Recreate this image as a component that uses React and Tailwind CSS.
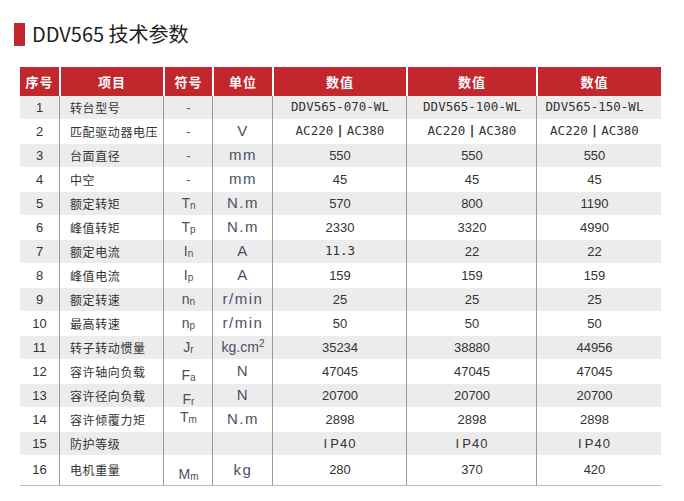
import React from "react";

const cols = "grid grid-cols-[41px_104px_49px_60px_134px_130px_123px]";

const Sym = ({ b, s, cls = "" }) => (
  <span className={"text-[14px] text-[#4b4f63] " + cls} style={{ fontFamily: "'Liberation Sans', sans-serif" }}>
    {b}
    <span className="text-[10px] relative top-[1px]">{s}</span>
  </span>
);

const AC = () => (
  <span>
    AC220<span className="mx-[3px] font-bold">|</span>AC380
  </span>
);

const rows = [
  ["1", "转台型号", "-", "", ["DDV565-070-WL", "DDV565-100-WL", "DDV565-150-WL"], "mono"],
  ["2", "匹配驱动器电压", "-", "V", [<AC />, <AC />, <AC />], "mono"],
  ["3", "台面直径", "-", "mm", ["550", "550", "550"]],
  ["4", "中空", "-", "mm", ["45", "45", "45"]],
  ["5", "额定转矩", <Sym b="T" s="n" />, "N.m", ["570", "800", "1190"]],
  ["6", "峰值转矩", <Sym b="T" s="p" />, "N.m", ["2330", "3320", "4990"]],
  ["7", "额定电流", <Sym b="I" s="n" />, "A", ["11.3", "22", "22"], "first-mono"],
  ["8", "峰值电流", <Sym b="I" s="p" />, "A", ["159", "159", "159"]],
  ["9", "额定转速", <Sym b="n" s="n" />, "r/min", ["25", "25", "25"]],
  ["10", "最高转速", <Sym b="n" s="p" />, "r/min", ["50", "50", "50"]],
  ["11", "转子转动惯量", <Sym b="J" s="r" />, "kg.cm²", ["35234", "38880", "44956"]],
  ["12", "容许轴向负载", <Sym b="F" s="a" cls="relative top-[4px]" />, "N", ["47045", "47045", "47045"]],
  ["13", "容许径向负载", <Sym b="F" s="r" cls="relative top-[4px]" />, "N", ["20700", "20700", "20700"]],
  ["14", "容许倾覆力矩", <Sym b="T" s="m" cls="relative top-[-2px]" />, "N.m", ["2898", "2898", "2898"]],
  ["15", "防护等级", "", "", ["IP40", "IP40", "IP40"], "ip"],
  ["16", "电机重量", <Sym b="M" s="m" cls="relative top-[4px]" />, "kg", ["280", "370", "420"]],
];

const heights = ["h-[23px]", "h-[25px]"];

export default function App() {
  const cjk = { fontFamily: "'Noto Sans CJK SC', sans-serif" };
  const sans = { fontFamily: "'Liberation Sans', 'Noto Sans CJK SC', sans-serif" };
  const mono = { fontFamily: "'DejaVu Sans Mono', monospace" };
  return (
    <div className="w-[684px] h-[501px] bg-white relative">
      <div className="flex items-center pt-[21px] pl-[14px] h-[46px]">
        <div className="w-[11px] h-[23px] bg-[#c1272d] mt-[2px]" />
        <div className="ml-[7px] text-[20px] text-[#1e1e1e] leading-[26px]" style={cjk}>
          DDV565 技术参数
        </div>
      </div>
      <div className="ml-[20px] mt-[21px] w-[641px]">
        <div className={cols + " h-[29px]"}>
          {["序号", "项目", "符号", "单位", "数值", "数值", "数值"].map((h, i) => (
            <div
              key={i}
              className={
                "bg-[#c1272d] text-white text-[13px] font-bold tracking-[1px] flex items-center justify-center " +
                (i < 6 ? "mr-[2px]" : "pr-[10px]")
              }
              style={cjk}
            >
              {h}
            </div>
          ))}
        </div>
        {rows.map((r, idx) => {
          const grey = idx % 2 === 0;
          const h = idx === 15 ? "h-[31px]" : heights[idx % 2];
          const bg = grey ? "bg-[#ececec]" : "bg-white";
          const cell = "flex items-center border-r border-[#999] ";
          return (
            <div key={idx} className={cols + " " + h + " " + bg + (idx === 15 ? " border-b border-[#bbb]" : "")}>
              <div className={cell + "justify-center text-[13px] text-[#333] mr-[1px]"} style={sans}>
                {r[0]}
              </div>
              <div className={cell + "pl-[9px] text-[12px] tracking-[0.6px] text-[#333] mr-[1px]"} style={cjk}>
                {r[1]}
              </div>
              <div className={cell + "justify-center text-[13px] text-[#555] mr-[1px]"} style={sans}>
                {r[2]}
              </div>
              <div className={cell + "justify-center text-[15px] tracking-[1.5px] text-[#4b4f63] mr-[1px]"} style={sans}>
                {r[3] === "kg.cm²" ? (
                  <span className="tracking-normal text-[14px]">
                    kg.cm<span className="text-[10px] relative top-[-5px]">2</span>
                  </span>
                ) : (
                  r[3]
                )}
              </div>
              {r[4].map((v, j) => (
                <div
                  key={j}
                  className={
                    "flex items-center justify-center text-[#333] " +
                    (j < 2 ? "border-r border-[#999] mr-[1px] " : "pr-[10px] ") +
                    (r[5] === "mono" || (r[5] === "first-mono" && j === 0) ? "text-[12.5px]" : "text-[13px]") +
                    (r[5] === "ip" ? " tracking-[1px]" : "")
                  }
                  style={r[5] === "mono" || (r[5] === "first-mono" && j === 0) ? mono : sans}
                >
                  {r[5] === "ip" ? (
                    <span>
                      I<span className="ml-[2px]">P40</span>
                    </span>
                  ) : (
                    v
                  )}
                </div>
              ))}
            </div>
          );
        })}
      </div>
    </div>
  );
}
